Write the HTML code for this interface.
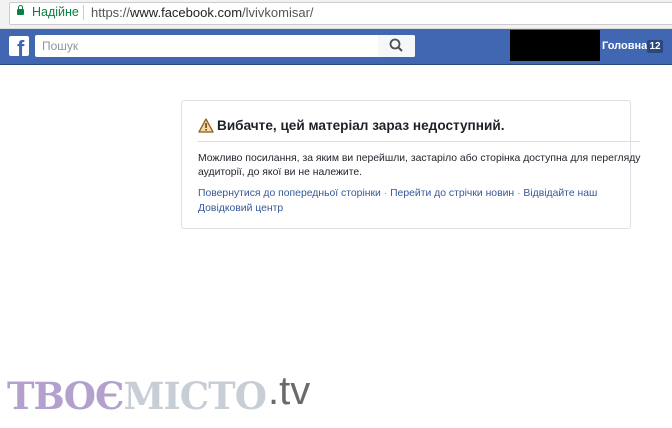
<!DOCTYPE html>
<html><head><meta charset="utf-8"><style>
body{margin:0;width:672px;height:428px;background:#fff;position:relative;overflow:hidden;font-family:"Liberation Sans",sans-serif}
.a{position:absolute}
</style></head><body>
<div class="a" style="left:0;top:0;width:672px;height:28px;background:#f2f2f2;border-bottom:1px solid #ddd"></div>
<div class="a" style="left:9px;top:2px;width:680px;height:21px;background:#fff;border:1px solid #ccc;border-radius:2px"></div>
<div class="a" style="left:17px;top:9px;width:7px;height:6px;background:#0b8043;border-radius:1px"></div>
<div class="a" style="left:18px;top:5px;width:3px;height:4px;border:1px solid #0b8043;border-bottom:none;border-radius:3px 3px 0 0"></div>
<div class="a" style="left:32px;top:5px;font-size:12.5px;color:#0b8043">Надійне</div>
<div class="a" style="left:83px;top:5px;width:1px;height:15px;background:#ccc"></div>
<div class="a" style="left:91px;top:5px;font-size:13px;color:#555">https://<span style="color:#222">www.facebook.com</span>/lvivkomisar/</div>
<div class="a" style="left:0;top:29px;width:672px;height:35px;background:#4267b2;border-bottom:1px solid #29487d"></div>
<div class="a" style="left:9px;top:36px;width:20px;height:20px;background:#fff;border-radius:2px;overflow:hidden"><div style="position:absolute;left:8px;top:2px;font:bold 22px 'Liberation Sans';color:#4267b2;line-height:22px">f</div></div>
<div class="a" style="left:35px;top:35px;width:380px;height:22px;background:#fff;border-radius:2px"></div>
<div class="a" style="left:42px;top:39px;font-size:12px;color:#90949c">Пошук</div>
<div class="a" style="left:378px;top:35px;width:37px;height:22px;background:#f6f7f9;border-radius:0 2px 2px 0"></div>
<svg class="a" style="left:389px;top:38px" width="14" height="14"><circle cx="6" cy="6" r="4.5" fill="none" stroke="#4b4f56" stroke-width="1.8"/><line x1="9.5" y1="9.5" x2="13" y2="13" stroke="#4b4f56" stroke-width="2"/></svg>
<div class="a" style="left:510px;top:30px;width:90px;height:31px;background:#000"></div>
<div class="a" style="left:602px;top:40px;font:bold 11px 'Liberation Sans';color:#fff">Головна</div>
<div class="a" style="left:647px;top:40px;width:16px;height:13px;background:#29487d;border-radius:2px;font:bold 10px 'Liberation Sans';color:#fff;text-align:center;line-height:13px">12</div>
<div class="a" style="left:181px;top:100px;width:448px;height:127px;border:1px solid #dddfe2;border-radius:3px"></div>
<svg class="a" style="left:198px;top:118px" width="16" height="15"><path d="M8 1L15 14H1Z" fill="#f7d9a8" stroke="#8a5a1a" stroke-width="1.3" stroke-linejoin="round"/><rect x="7.3" y="5" width="1.5" height="5" fill="#5a3a10"/><rect x="7.3" y="11" width="1.5" height="1.5" fill="#5a3a10"/></svg>
<div class="a" style="left:217px;top:118px;font:bold 13.6px 'Liberation Sans';color:#1d2129">Вибачте, цей матеріал зараз недоступний.</div>
<div class="a" style="left:197px;top:141px;width:443px;height:1px;background:#dddfe2"></div>
<div class="a" style="left:198px;top:152px;white-space:nowrap;font-size:10.4px;line-height:14px;color:#1d2129">Можливо посилання, за яким ви перейшли, застаріло або сторінка доступна для перегляду<br>аудиторії, до якої ви не належите.</div>
<div class="a" style="left:198px;top:186px;white-space:nowrap;font-size:10.4px;line-height:15px;color:#365899">Повернутися до попередньої сторінки <span style="color:#90949c">·</span> Перейти до стрічки новин <span style="color:#90949c">·</span> Відвідайте наш<br>Довідковий центр</div>
<div class="a" style="left:7px;top:376px;font:bold 37px 'DejaVu Serif',serif;letter-spacing:-1px;line-height:40px"><span style="color:#b3a0cc">ТВОЄ</span><span style="color:#c8ced6">МІСТО</span></div>
<div class="a" style="left:268px;top:368px;font:40px 'Liberation Sans',sans-serif;color:#6a6a6a;line-height:46px">.tv</div>
</body></html>
